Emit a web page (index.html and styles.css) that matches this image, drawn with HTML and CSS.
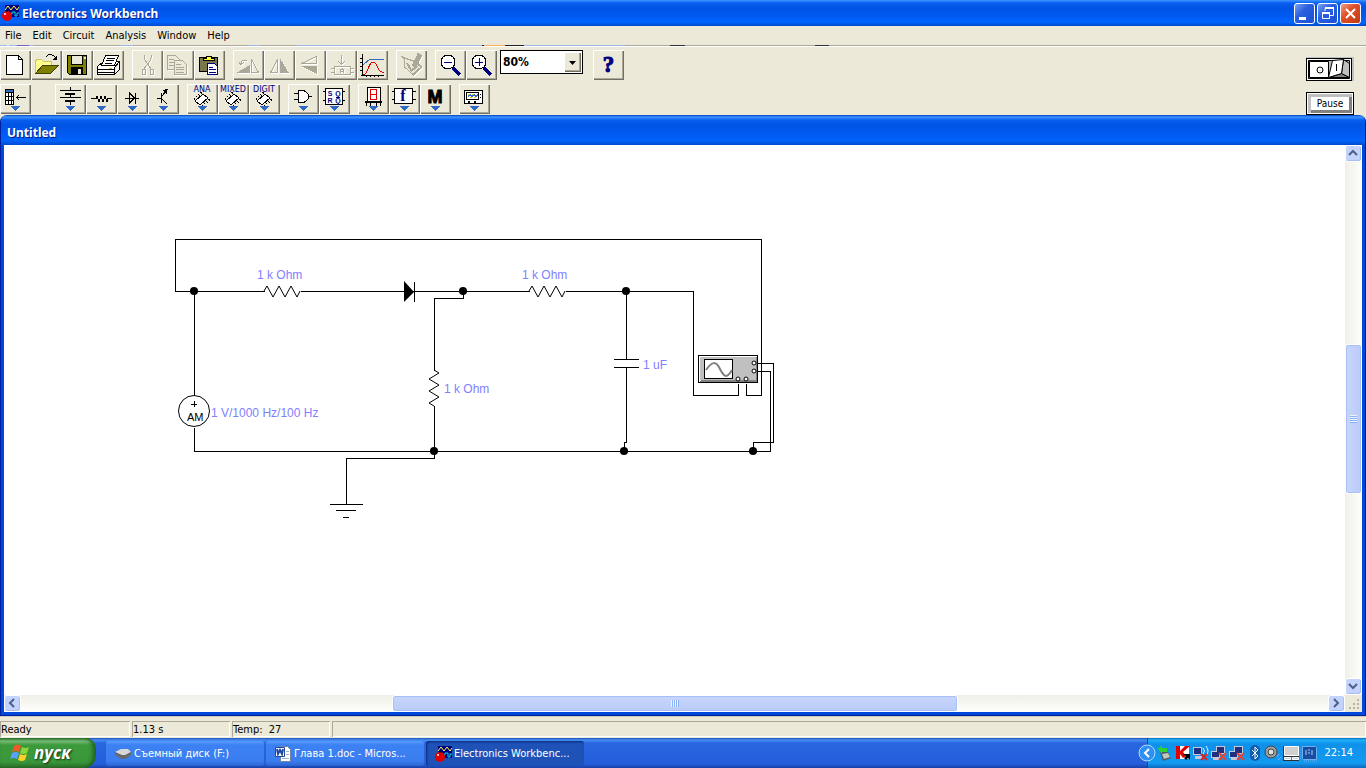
FILE: index.html
```html
<!DOCTYPE html>
<html lang="en">
<head>
<meta charset="utf-8">
<title>Electronics Workbench</title>
<link rel="stylesheet" href="styles.css">
</head>
<body>
<svg class="defs" width="0" height="0" aria-hidden="true">
  <defs>
    <symbol id="ewb" viewBox="0 0 18 18">
      <path fill="#000080" d="M4 1h14v12H4z"/>
      <path fill="none" stroke="#ffff40" d="M4 6l3-4 3 4 3-4 3 4 2-3"/>
      <path fill="none" stroke="#00e0e0" d="M9 10h2V8h3v4h2V9h2"/>
      <circle cx="6" cy="12" r="5" fill="#e00000"/><circle cx="4" cy="10" r="1" fill="#fff"/>
      <path stroke="#000" d="M6 6v2"/>
    </symbol>
    <symbol id="chip" viewBox="0 0 31 30">
      <path fill="#fff" stroke="#000" d="M8 17l8-7 5 4-8 7z"/>
      <path stroke="#000" stroke-width="2" stroke-dasharray="1 2" fill="none" d="M7 15l8-7M15 22l8-7"/>
      <path fill="#316ac5" d="M10 22h10l-5 5z"/>
    </symbol>
    <symbol id="monitors" viewBox="0 0 18 18">
      <path fill="#c8c8d8" d="M6 2h9v8H6zM1 7h9v7H1zM3 14h6v2H3z"/><path fill="#203080" d="M7 3h7v6H7zM2 8h7v5H2z"/>
      <path stroke="#f04030" stroke-width="2" d="M9 9l7 7M16 9l-7 7"/>
    </symbol>
  </defs>
</svg>

<header class="titlebar">
  <svg class="app-icon" width="18" height="18"><use href="#ewb"/></svg>
  <h1>Electronics Workbench</h1>
  <div class="window-buttons">
    <button aria-label="Minimize"><svg width="19" height="19"><path fill="#fff" d="M4 13h7v3H4z"/></svg></button>
    <button aria-label="Restore"><svg width="19" height="19"><path fill="none" stroke="#fff" d="M7 7V4.500h8.500v7H12"/><path stroke="#fff" stroke-width="2" d="M7 4h9M4 9h8"/><path fill="none" stroke="#fff" d="M4.500 8.500h7v6h-7z"/></svg></button>
    <button class="close" aria-label="Close"><svg width="19" height="19"><path stroke="#fff" stroke-width="2" d="M5 5l9 9M14 5l-9 9"/></svg></button>
  </div>
</header>

<nav class="menubar">
  <a href="#">File</a><a href="#">Edit</a><a href="#">Circuit</a><a href="#">Analysis</a><a href="#">Window</a><a href="#">Help</a>
</nav>

<section class="tools">
  <div class="toolbars">
    <div class="toolbar">
      <div class="group">
        <button aria-label="New"><svg viewBox="0 0 31 30"><path fill="#fff" stroke="#000" d="M6.500 5.500h12l4 4v15h-16zM18.500 5.500v4h4"/></svg></button>
        <button aria-label="Open"><svg viewBox="0 0 31 30"><path fill="#ffff90" stroke="#c8c860" d="M4.500 23.500v-12l1-2h5l2 2h8v5h-9z"/><path fill="#808000" stroke="#404000" d="M4.500 23.500l7-8h16l-8 8z"/><path fill="none" stroke="#000" d="M15 7q4-5 9 0l1 1"/><path d="M21 10h5V5z"/></svg></button>
        <button aria-label="Save"><svg viewBox="0 0 31 30"><path fill="#808000" stroke="#000" d="M5.500 5.500h19v19h-17l-2-2z"/><path fill="#ece9d8" stroke="#000" d="M9.500 5.500h11v9h-11z"/><path d="M9 17h12v8H9z"/><path fill="#ece9d8" d="M16 19h3v5h-3zM22 7h2v2h-2z"/></svg></button>
        <button aria-label="Print"><svg viewBox="0 0 31 30"><path fill="#fff" stroke="#000" d="M4.500 16.500l6-5h16l-5 6v7h-17zM21.500 24.500l5-5v-8"/><path fill="#fff" stroke="#000" d="M8.500 15.500l4-10h13l-4 10z"/><path stroke="#000" d="M14 8.500h8M13 10.500h8M12 13.500h7M4 19.500h18M4 22.500h18"/><path stroke="#d0c000" d="M16 18h3"/></svg></button>
      </div>
      <div class="group">
        <button class="off" aria-label="Cut"><svg viewBox="0 0 31 30"><path fill="none" stroke="#aca899" d="M12 5l1 5 6 9M20 5l-2 6-6 8"/><ellipse cx="12" cy="22" rx="2" ry="3" fill="none" stroke="#aca899"/><ellipse cx="20" cy="22" rx="2" ry="3" fill="none" stroke="#aca899"/></svg></button>
        <button class="off" aria-label="Copy"><svg viewBox="0 0 31 30"><path fill="#ece9d8" stroke="#aca899" d="M4.500 5.500h8l4 4v10h-12z"/><path fill="#ece9d8" stroke="#aca899" d="M11.500 10.500h8l4 4v10h-12z"/><path stroke="#aca899" d="M6 9.500h5M6 12.500h5M6 15.500h5M13 14.500h5M13 17.500h8M13 19.500h8M13 22.500h8"/></svg></button>
        <button aria-label="Paste"><svg viewBox="0 0 31 30"><path fill="#78784a" stroke="#000" d="M5.500 7.500h18v14h-18z"/><path fill="#ffff40" stroke="#000" d="M9.500 10.500v-2h3v-2h5v2h3v2z"/><path fill="#fff" stroke="#000080" d="M13.500 13.500h7l3 3v8h-10z"/><path stroke="#000080" d="M15 17.500h4M15 19.500h7M15 22.500h7"/></svg></button>
      </div>
      <div class="group">
        <button class="off" aria-label="Rotate"><svg viewBox="0 0 31 30"><path fill="#aca899" d="M3 23l14-8v8z"/><path fill="none" stroke="#aca899" d="M18.500 22.500v-13l7 13zM8 14c0-4 2-4 6-4M6 12l2 3 3-3"/></svg></button>
        <button class="off" aria-label="Flip horizontal"><svg viewBox="0 0 31 30"><path fill="#aca899" d="M16 23V8l9 15z"/><path fill="none" stroke="#aca899" d="M6.500 22.500l7-13v13z"/></svg></button>
        <button class="off" aria-label="Flip vertical"><svg viewBox="0 0 31 30"><path fill="#aca899" d="M6 16h16v8z"/><path fill="none" stroke="#aca899" d="M6.500 13.500l15-7v7z"/></svg></button>
        <button class="off" aria-label="Component properties"><svg viewBox="0 0 31 30"><path fill="none" stroke="#aca899" d="M8.500 16.500h16v8h-16zM5 18.500h3M5 22.500h3M25 18.500h3M25 22.500h3M15.500 5v9M12 11l3.500 3.500L19 11"/><path fill="none" stroke="#aca899" d="M14.500 23v-3l2-1 1 1v3M15 21.500h3"/></svg></button>
        <button aria-label="Display graphs"><svg viewBox="0 0 31 30"><path stroke="#000" d="M5.500 4v21M4 25.500h23M3 8.500h2M3 12.500h2M3 16.500h2M3 20.500h2M9.500 26v1M13.500 26v1M17.500 26v1M21.500 26v1"/><path fill="none" stroke="#316ac5" d="M6 15l7-6h14"/><path fill="none" stroke="#e00000" d="M6 25c6-1 5-13 10-13s4 10 9 10h2"/></svg></button>
      </div>
      <div class="group">
        <button class="off" aria-label="Analyze"><svg viewBox="0 0 31 30"><path fill="#ece9d8" stroke="#aca899" d="M5 6l4 3M8.500 8v9l9 8 8-8-5-5z"/><path stroke="#aca899" stroke-width="5" d="M24 4l-6 13"/><path fill="none" stroke="#aca899" stroke-width="2" d="M11 13l4 7 4-2"/><path stroke="#aca899" d="M15 22l8-7M17 24l8-7"/></svg></button>
      </div>
      <div class="group">
        <button aria-label="Zoom out"><svg viewBox="0 0 31 30"><path stroke="#000080" stroke-width="3" d="M18 18l7 7"/><circle cx="13" cy="12" r="7" fill="#fff" stroke="#000"/><path stroke="#000080" d="M9 12.500h8"/></svg></button>
        <button aria-label="Zoom in"><svg viewBox="0 0 31 30"><path stroke="#000080" stroke-width="3" d="M18 18l7 7"/><circle cx="13" cy="12" r="7" fill="#fff" stroke="#000"/><path stroke="#000080" d="M9 12.500h8M13.500 8v8"/></svg></button>
      </div>
      <div class="zoom">
        <select aria-label="Zoom level"><option>80%</option></select>
        <svg class="drop" viewBox="0 0 17 20" aria-hidden="true"><path d="M5 9h7l-3.500 4z"/></svg>
      </div>
      <button class="help" aria-label="Help">?</button>
    </div>

    <div class="toolbar parts">
      <div class="group first">
        <button aria-label="Favorites"><svg viewBox="0 0 31 30"><path fill="#fff" stroke="#000" d="M5.500 5.500h8v15h-8zM8.500 5v15M11.500 5v15M5 8.500h9M5 12.500h9M5 16.500h9"/><path fill="#316ac5" d="M6 6h7v2H6z"/><path stroke="#000" fill="none" d="M17 13.500h9M19 11l-2.500 2.500L19 16"/><path fill="#316ac5" d="M10 22h10l-5 5z"/></svg></button>
      </div>
      <div class="group">
        <button aria-label="Sources"><svg viewBox="0 0 31 30"><path stroke="#000" d="M5 6.500h21M5 13.500h21M15.500 3v3M15.500 11v2M15.500 18v3"/><path d="M10 9h10v2H10zM10 16h10v2H10z"/><path fill="#316ac5" d="M10 22h10l-5 5z"/></svg></button>
        <button aria-label="Basic"><svg viewBox="0 0 31 30"><path fill="none" stroke="#000" d="M5 14.500h5l1-2 2 5 2-5 2 5 2-5 2 5 1-3h4"/><path fill="#316ac5" d="M10 22h10l-5 5z"/></svg></button>
        <button aria-label="Diodes"><svg viewBox="0 0 31 30"><path fill="none" stroke="#000" d="M8 14.500h14M12.500 9v10l5-5zM18.500 9v11"/><path fill="#316ac5" d="M10 22h10l-5 5z"/></svg></button>
        <button aria-label="Transistors"><svg viewBox="0 0 31 30"><path fill="none" stroke="#000" d="M9 14.500h4M13.500 9v10M14 12l6-7M14 15l5 5"/><path d="M14 6l5-1v5z"/><path fill="#316ac5" d="M10 22h10l-5 5z"/></svg></button>
      </div>
      <div class="group">
        <button aria-label="Analog ICs"><svg viewBox="0 0 31 30"><use href="#chip"/><text class="tag" x="15" y="8">ANA</text></svg></button>
        <button aria-label="Mixed ICs"><svg viewBox="0 0 31 30"><use href="#chip"/><text class="tag" x="15" y="8">MIXED</text></svg></button>
        <button aria-label="Digital ICs"><svg viewBox="0 0 31 30"><use href="#chip"/><text class="tag" x="15" y="8">DIGIT</text></svg></button>
      </div>
      <div class="group">
        <button aria-label="Logic gates"><svg viewBox="0 0 31 30"><path fill="#fff" stroke="#000" d="M10.500 6.500h5q5 2 5 6t-5 6h-5z"/><path stroke="#000" d="M6 9.500h4M6 15.500h4M21 12.500h3"/><path fill="#316ac5" d="M10 22h10l-5 5z"/></svg></button>
        <button aria-label="Digital"><svg viewBox="0 0 31 30"><path fill="#fff" stroke="#000" d="M6.500 4.500h17v16h-17zM4 7.500h3M4 16.500h3M23 7.500h3M23 16.500h3"/><text class="pin" x="11" y="12">S</text><text class="pin" x="19" y="12">Q</text><text class="pin" x="11" y="19">R</text><text class="pin" x="19" y="19">Q</text><path stroke="#000080" d="M17 13.500h4"/><path fill="#316ac5" d="M10 22h10l-5 5z"/></svg></button>
      </div>
      <div class="group">
        <button aria-label="Indicators"><svg viewBox="0 0 31 30"><path fill="#fff" stroke="#000" d="M9.500 3.500h13v14h-13z"/><path fill="none" stroke="#e00000" d="M12.500 5.500h6v10h-6zM12 10.500h7"/><path d="M7 17h17v2H7zM8 19h1v3H8zM12 19h1v3h-1zM18 19h1v3h-1zM22 19h1v3h-1z"/><path fill="#316ac5" d="M10 22h10l-5 5z"/></svg></button>
        <button aria-label="Controls"><svg viewBox="0 0 31 30"><path fill="#fff" stroke="#000" d="M5.500 4.500h18v15h-18zM3 7.500h3M3 15.500h3M24 7.500h3M24 15.500h3"/><text class="fn" x="14" y="17">f</text><path fill="#316ac5" d="M10 22h10l-5 5z"/></svg></button>
        <button aria-label="Miscellaneous"><svg viewBox="0 0 31 30"><text class="misc" x="15" y="19">M</text><path fill="#316ac5" d="M10 22h10l-5 5z"/></svg></button>
      </div>
      <div class="group">
        <button aria-label="Instruments"><svg viewBox="0 0 31 30"><path fill="#fff" stroke="#000" d="M5.500 6.500h18v13h-18zM7.500 8.500h12v7h-12z"/><path fill="none" stroke="#316ac5" d="M9 13l2-3 2 3 2-3 2 3 2-3"/><path stroke="#d8d800" d="M9 10.500h2M13 10.500h2M11 13.500h2M15 13.500h2"/><path d="M21 10h1v1h-1zM21 13h1v1h-1zM9 17h2v2H9zM15 17h2v2h-2z"/><path fill="#316ac5" d="M10 22h10l-5 5z"/></svg></button>
      </div>
    </div>
  </div>
  <div class="simulate">
    <button class="power" aria-label="Activate simulation"><svg width="48" height="24" viewBox="0 0 48 24"><path fill="#c0c0c0" d="M0 0h48v24H0z"/><path d="M0 1h46v23H0z"/><path fill="#fff" d="M1 2h44v21H1z"/><path fill="#c0c0c0" stroke="#000" d="M2.500 3.500h41v18h-41z"/><path fill="#fff" stroke="#000" d="M3.500 4.500h19v16h-19z"/><path fill="#808080" stroke="#000" d="M22.500 20.500l13-4 8 4z"/><path fill="#c0c0c0" stroke="#000" d="M37.500 2.500l6 4v14l-8-4z"/><path fill="#fff" stroke="#000" d="M22.500 20.500l4-17 11-1-2 14z"/><circle cx="14" cy="13" r="3" fill="none" stroke="#000"/><path stroke="#000" d="M30.500 7v7"/></svg></button>
    <button class="pause">Pause</button>
  </div>
</section>

<main class="document">
  <h2>Untitled</h2>
  <div class="view">
    <div class="workspace">
      <svg class="circuit" width="620" height="300" viewBox="166 231 620 300" role="img" aria-label="Detector circuit">
        <g class="wires" transform="translate(.5 .5)">
          <path d="M264 291H175V239H761V395H746V383M300 291H463V298H434V370M463 291H529M565 291H693V395H738V383M194 291V395M194 427V451H770V371H756M434 405V458H346V504M626 291V359M626 367V442H624V451M756 363H773V442H753V451"/>
          <path d="M613 359h25M613 367h25M329 504h33M335 510h20M342 517h6M414 281v20"/>
        </g>
        <g class="zigzag">
          <path d="M264 291l3-5 6 11 6-11 6 11 6-11 6 11 3-6M529 291l3-5 6 11 6-11 6 11 6-11 6 11 3-6M434 370l5 3-10 6 10 6-10 6 10 6-10 6 5 3"/>
          <circle cx="194" cy="411" r="15.500"/>
          <path d="M191 404.500h6M194.500 401v6"/>
        </g>
        <path d="M404 281v21l10-10z"/>
        <g class="nodes"><circle cx="194" cy="291" r="4"/><circle cx="463" cy="291" r="4"/><circle cx="626" cy="291" r="4"/><circle cx="434" cy="451" r="4"/><circle cx="624" cy="451" r="4"/><circle cx="753" cy="451" r="4"/></g>
        <g class="scope" transform="translate(698 355)">
          <path d="M0 0h60v28H0z"/><path fill="#fff" d="M1 1h58v26H1z"/><path fill="#808080" d="M3 25h54V3l2-2v26H1z"/><path fill="#c0c0c0" d="M2 2h56v23H2z"/>
          <path d="M6 4h29v20H6z"/><path fill="#fff" d="M7 5h27v18H7z"/>
          <path class="smooth" fill="none" stroke="#808080" stroke-width="2" d="M8 15C14 6 18 6 22 14S29 24 34 15"/>
          <g class="smooth" fill="#fff" stroke="#000"><circle cx="56" cy="8" r="2"/><circle cx="56" cy="16" r="2"/><circle cx="40" cy="24" r="2"/><circle cx="48" cy="24" r="2"/></g>
        </g>
        <text class="am" x="187" y="421">AM</text>
        <g class="values"><text x="257" y="279">1 k Ohm</text><text x="522" y="279">1 k Ohm</text><text x="444" y="393">1 k Ohm</text><text x="643" y="369">1 uF</text><text x="211" y="417">1 V/1000 Hz/100 Hz</text></g>
      </svg>
    </div>
    <div class="vscroll">
      <button aria-label="Scroll up"><svg viewBox="0 0 15 15"><path d="M3 9l4-4 4 4"/></svg></button>
      <div class="before"></div><div class="thumb"></div><div class="after"></div>
      <button aria-label="Scroll down"><svg viewBox="0 0 15 15"><path d="M3 5l4 4 4-4"/></svg></button>
    </div>
    <div class="hscroll">
      <button aria-label="Scroll left"><svg viewBox="0 0 15 15"><path d="M9 3L5 7l4 4"/></svg></button>
      <div class="before"></div><div class="thumb"></div><div class="after"></div>
      <button aria-label="Scroll right"><svg viewBox="0 0 15 15"><path d="M5 3l4 4-4 4"/></svg></button>
    </div>
    <svg class="grip" viewBox="0 0 17 17" aria-hidden="true"><path fill="#b8b4a0" d="M12 4h2v2h-2zM8 8h2v2H8zM12 8h2v2h-2zM4 12h2v2H4zM8 12h2v2H8zM12 12h2v2h-2z"/></svg>
  </div>
</main>

<footer class="status"><span>Ready</span><span>1.13 s</span><span>Temp:&nbsp; 27</span><span></span></footer>

<div class="taskbar">
  <button class="start"><svg width="22" height="20" viewBox="0 0 22 20"><path fill="#f05a28" d="M4 3q4-3 7 0L9 9Q6 7 2 9z"/><path fill="#8cd63c" d="M12 4q4 2 7 0l-2 6q-3 2-7 0z"/><path fill="#5aa0ff" d="M2 10q4-2 7 0l-2 6q-3-2-7 0z"/><path fill="#ffd028" d="M10 11q4 2 7 0l-2 6q-3 2-7 0z"/></svg>пуск</button>
  <div class="tasks">
    <button><svg width="18" height="18"><path fill="#d8d8d8" d="M1 7l6-3h7l3 3-6 4H8z"/><path fill="#686868" d="M1 7l7 3h3l6-3v3l-6 4H8l-7-4z"/></svg><span>Съемный диск (F:)</span></button>
    <button><svg width="18" height="18"><path fill="#fff" stroke="#7080a0" d="M6.500 1.500h7l3 3v12h-10z"/><path fill="#fff" stroke="#2048a0" d="M1.500 2.500h9v9h-9z"/><path fill="none" stroke="#2048a0" stroke-width="2" d="M3 4l1 5 2-4 2 4 1-5"/><path stroke="#a0b0d0" d="M12 6.500h3M12 9.500h3M8 13.500h7"/></svg><span>Глава 1.doc - Micros...</span></button>
    <button class="active"><svg width="18" height="18"><use href="#ewb"/></svg><span>Electronics Workbenc...</span></button>
  </div>
  <div class="tray">
    <button class="expand" aria-label="Show hidden icons"><svg width="18" height="18"><circle cx="9" cy="9" r="8" fill="#3090f0" stroke="#b0d8ff"/><path fill="none" stroke="#fff" stroke-width="2" d="M11 5L7 9l4 4"/></svg></button>
    <svg width="18" height="18"><path fill="#505860" d="M4 8h8l3 6-8 3z"/><path fill="#c0c8c0" d="M6 10l6-1 2 4-6 2z"/><path fill="#30d030" d="M2 5l4-4v3h5v4H6v2z"/></svg>
    <svg width="18" height="18"><path fill="#fff" d="M2 2h13v13H2z"/><path fill="#e00000" d="M2 2h4v5l5-5h5L9 8l3 4-3 2-3-4v5H2z"/><path d="M9 10h7v6l-2-2-2 2-2-2 2-2z"/></svg>
    <svg width="18" height="18"><path fill="#c8c8d8" d="M1 3h9v8H1zM3 12h7v3H3z"/><path fill="#203080" d="M2 4h7v6H2z"/><path fill="none" stroke="#e8f0ff" d="M11 4q3 3 0 6M14 2q4 5 0 10"/><path stroke="#e02020" stroke-width="2" d="M9 10l6 6M15 10l-6 6"/></svg>
    <svg width="18" height="18"><use href="#monitors"/></svg>
    <svg width="18" height="18"><use href="#monitors"/></svg>
    <svg width="18" height="18"><rect x="4" y="1" width="10" height="16" rx="5" fill="#105cae"/><path fill="none" stroke="#fff" d="M6 6l6 6-3 3V3l3 3-6 6"/></svg>
    <svg width="18" height="18"><circle cx="7" cy="8" r="6" fill="#a0a0a0" stroke="#404040"/><circle cx="7" cy="8" r="3" fill="#e0e0e0" stroke="#404040"/><path fill="none" stroke="#80b0ff" d="M13 13l2-3M14 16l3-3"/></svg>
    <svg width="18" height="18"><path fill="#d0d0d0" stroke="#fff" d="M2.500 2.500h14v9h-14zM2.500 13.500h6v2h-6zM10.500 13.500h6v2h-6z"/><path fill="none" stroke="#303030" d="M1 12.500h16M1.500 2v15M1 16.500h16"/></svg>
    <svg width="18" height="18"><path fill="#174ca0" stroke="#70b0f0" d="M2.500 2.500h13l1 1v12h-13l-1-1z"/><path fill="none" stroke="#70b0f0" stroke-dasharray="1 1" d="M0 4v11M4 17h13"/><path fill="none" stroke="#a8d0ff" d="M6 6v5M12 6v5M8 6h2M8 9h2"/></svg>
    <time>22:14</time>
  </div>
</div>
</body>
</html>
```
FILE: styles.css
```css
* { box-sizing: border-box; }
body {
  margin: 0;
  min-height: 100vh;
  display: flex;
  flex-direction: column;
  background: #ece9d8;
  color: #000;
  font: 11px/14px "DejaVu Sans Condensed", "DejaVu Sans", sans-serif;
}
button { font: inherit; padding: 0; border: 0; color: inherit; }
svg { display: block; flex: none; }
.defs { position: absolute; }

.titlebar {
  display: flex;
  align-items: center;
  height: 26px;
  padding: 0 5px 0 1px;
  gap: 3px;
  background: linear-gradient(#3d95ff 0, #0a5ff0 3px, #0054e3 8px, #005cf5 18px, #0066ff 22px, #0048cc 26px);
}
.titlebar h1, .document h2 {
  margin: 0;
  flex: 1;
  color: #fff;
  font: bold 12px/18px "Noto Sans", sans-serif;
  text-shadow: 1px 1px #0a1883;
}
.titlebar h1 { padding-top: 2px; }
.window-buttons { display: flex; gap: 2px; }
.window-buttons button {
  width: 21px;
  height: 21px;
  border: 1px solid #fff;
  border-radius: 3px;
  background: linear-gradient(135deg, #7ba2f0, #2a5fe0 40%, #1c50d0);
}
.window-buttons .close { background: linear-gradient(135deg, #f0a088, #e0502a 40%, #c03810); }

.menubar {
  display: flex;
  gap: 11px;
  height: 21px;
  padding: 3px 5px 0;
  border-bottom: 1px solid #fff;
  background:
    linear-gradient(90deg, #9db9eb 7px, transparent 7px 9px, #9db9eb 9px 17px, #7b5fc0 17px 29px, #9db9eb 29px 34px, #aca899 34px 120px, #9db9eb 120px 133px, #aca899 133px 248px, #9db9eb 248px 260px, #aca899 260px 297px, #9db9eb 297px 482px, #222 482px 484px, #f5b060 484px 505px, #222 505px 524px, #9db9eb 524px 625px, #aca899 625px 670px, #333 670px 685px, #aca899 685px 815px, #333 815px 829px, #aca899 829px) bottom / 100% 1px no-repeat,
    #ece9d8;
}
.menubar a { color: #000; text-decoration: none; }

.tools { display: flex; justify-content: space-between; padding: 3px 12px 0 0; height: 68px; }
.toolbars { display: flex; flex-direction: column; gap: 4px; }
.toolbar, .group { display: flex; align-items: flex-start; }
.toolbar { gap: 8px; }
.parts .first { margin-right: 16px; }
.toolbar button {
  width: 31px;
  height: 30px;
  background: #ece9d8;
  box-shadow: inset 1px 1px #fff, inset -1px -1px #716f64, inset -2px -2px #aca899;
}
.toolbar button svg { width: 31px; height: 30px; shape-rendering: crispEdges; }
.off svg { filter: drop-shadow(1px 1px #fff); }
.tag { font: 8px "DejaVu Sans", sans-serif; fill: #000080; text-anchor: middle; }
.pin { font: bold 7px "Liberation Sans", sans-serif; fill: #000080; text-anchor: middle; }
.fn { font: bold 16px "Liberation Serif", serif; fill: #000080; text-anchor: middle; }
.misc { font: bold 18px "Liberation Sans", sans-serif; text-anchor: middle; stroke: #000; }
.toolbar .help { margin-left: 2px; font: bold 23px/30px "Liberation Serif", serif; color: #000080; -webkit-text-stroke: 1px #000080; }
.zoom { display: grid; width: 83px; margin-left: -5px; border: 1px solid #000; background: #fff; }
.zoom select {
  grid-area: 1 / 1;
  appearance: none;
  height: 22px;
  padding: 0 2px;
  border: 0;
  background: #fff;
  color: #000;
  font: bold 12px/20px "DejaVu Sans Condensed", sans-serif;
}
.zoom .drop {
  grid-area: 1 / 1;
  justify-self: end;
  width: 17px;
  height: 20px;
  margin: 1px;
  background: #ece9d8;
  box-shadow: inset 1px 1px #fff, inset -1px -1px #716f64, inset -2px -2px #aca899;
  pointer-events: none;
}
.simulate { display: flex; flex-direction: column; gap: 11px; padding-top: 7px; }
.power { background: none; }
.pause {
  height: 23px;
  border: 1px solid #000;
  font-size: 10px;
  line-height: 13px;
  background: #fff;
  box-shadow: inset 1px 1px #fff, inset -1px -1px #fff, inset 4px 4px #c0c0c0, inset -4px -4px #808080;
}

.document {
  flex: 1;
  display: flex;
  flex-direction: column;
  padding: 0 4px 4px;
  border-radius: 7px 7px 0 0;
  background: linear-gradient(#0040c0 0, #3d95ff 2px, #0a5ff0 5px, #0054e3 10px, #005cf5 21px, #0062fa 26px, #0048cc 30px, #0048dc 31px);
  box-shadow: inset 1px -1px #001ea0, inset -1px -1px #001ea0;
}
.document h2 { flex: none; height: 30px; padding: 9px 3px 0; }
.view { flex: 1; display: grid; grid-template: 1fr 17px / 1fr 17px; }
.workspace { background: #fff; padding: 86px 0 0 162px; }
.wires { fill: none; stroke: #000; shape-rendering: crispEdges; }
.zigzag { fill: none; stroke: #000; }
.scope { shape-rendering: crispEdges; }
.smooth { shape-rendering: auto; }
.values { font: 12px "Liberation Sans", sans-serif; fill: #8080ff; }
.am { font: 11px "Liberation Sans", sans-serif; }

.vscroll, .hscroll { display: flex; }
.vscroll { flex-direction: column; background: linear-gradient(90deg, #f0f0e8, #fefefb); }
.hscroll { background: linear-gradient(#f0f0e8, #fefefb); }
.vscroll button, .hscroll button {
  width: 17px;
  height: 17px;
  border: 1px solid #fff;
  border-radius: 3px;
  background: #c3d3fd;
  box-shadow: inset -1px -1px #a8bef0;
}
.vscroll button svg, .hscroll button svg { width: 15px; height: 15px; fill: none; stroke: #4d6185; stroke-width: 2; }
.thumb { border: 1px solid #fff; border-radius: 3px; box-shadow: inset 0 0 0 1px #a8c0f8; }
.vscroll .before { flex: 183; }
.vscroll .thumb {
  flex: 148;
  background: repeating-linear-gradient(#eef4fe 0 1px, #8cb0f8 1px 2px) center / 7px 8px no-repeat, linear-gradient(90deg, #c8d6fc, #b9cbf8);
}
.vscroll .after { flex: 185; }
.hscroll .before { flex: 372; }
.hscroll .thumb {
  flex: 564;
  background: repeating-linear-gradient(90deg, #eef4fe 0 1px, #8cb0f8 1px 2px) center / 8px 7px no-repeat, linear-gradient(#c8d6fc, #b9cbf8);
}
.hscroll .after { flex: 371; }
.grip { width: 17px; height: 17px; background: #ece9d8; }

.status { display: flex; gap: 2px; height: 22px; padding: 4px 0 1px; border-top: 1px solid #d0ccbc; }
.status span {
  width: 98px;
  padding: 2px 1px;
  box-shadow: inset 1px 1px #aca899, inset -1px -1px #fff;
}
.status span:first-child { width: 130px; }
.status span:last-child { flex: 1; }

.taskbar {
  display: flex;
  height: 30px;
  color: #fff;
  background: linear-gradient(#1f4fb8 0, #4590f5 2px, #2a66e0 5px, #245edb 26px, #1941a5 30px);
}
.start {
  display: flex;
  align-items: center;
  gap: 2px;
  width: 96px;
  padding-left: 10px;
  border-radius: 0 10px 12px 0;
  background: linear-gradient(#2f7a2f 0, #7cc07c 3px, #3c9a3c 7px, #3a963a 24px, #2a702a 30px);
  box-shadow: inset -3px 0 4px #206020;
  font: italic bold 17px/20px "Open Sans", sans-serif;
  text-shadow: 1px 1px 2px #103010;
}
.tasks { flex: 1; display: flex; gap: 2px; padding: 3px 10px; }
.tasks button {
  display: flex;
  align-items: center;
  gap: 2px;
  width: 158px;
  height: 25px;
  padding-left: 8px;
  border-radius: 3px;
  background: linear-gradient(#5a9cff 0, #3c81f3 4px, #3a7df0 20px, #2c62d0 25px);
  white-space: nowrap;
}
.tasks .active { background: #1e52b7; box-shadow: inset 1px 1px 2px #0c2c78; }
.tray {
  display: flex;
  align-items: center;
  padding-right: 13px;
  background: linear-gradient(#0d6cc0 0, #1cb0f8 2px, #0f90ea 6px, #129bf0 25px, #0c68c0 30px);
  border-left: 1px solid #0a4a9c;
}
.expand { margin-left: -10px; background: none; border-radius: 9px; }
.tray time { margin-left: 6px; }
```
